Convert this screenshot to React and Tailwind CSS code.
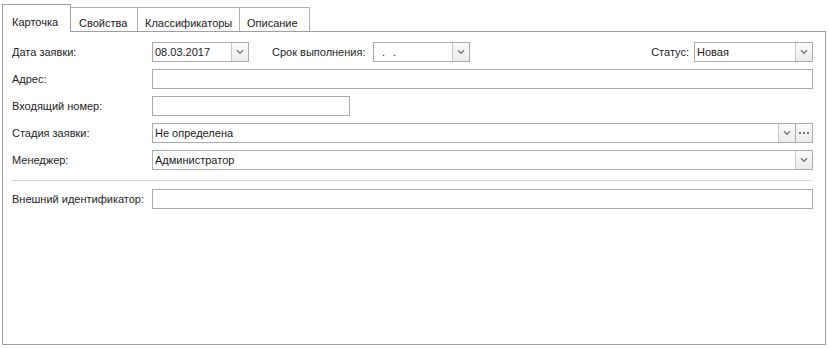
import React from "react";

const font = { fontFamily: '"Liberation Sans", Arial, sans-serif' };

function Chevron() {
  return (
    <svg width="8" height="6" viewBox="0 0 8 6" className="block">
      <path d="M1 1.3 L4 4.2 L7 1.3" fill="none" stroke="#7a7a7a" strokeWidth="1.5" />
    </svg>
  );
}

function DropBtn() {
  return (
    <div className="w-[17px] h-full flex items-center justify-center border-l border-[#c9c9c9] bg-gradient-to-b from-[#fbfbfb] to-[#ebebeb]">
      <Chevron />
    </div>
  );
}

function Combo({ className = "", value = "", children }) {
  return (
    <div className={"h-[20px] border border-[#ababab] bg-white flex items-stretch " + className}>
      <div className="flex-1 flex items-center pl-[2px] text-[11px] text-[#1b1b1b] whitespace-nowrap overflow-hidden">
        {children ?? value}
      </div>
      <DropBtn />
    </div>
  );
}

function TextBox({ className = "" }) {
  return <div className={"h-[20px] border border-[#ababab] bg-white " + className} />;
}

function Label({ children, className = "" }) {
  return (
    <div className={"text-[11px] text-[#1e1e1e] whitespace-nowrap " + className}>{children}</div>
  );
}

export default function App() {
  return (
    <div className="w-[829px] h-[348px] bg-white overflow-hidden" style={font}>
      <div className="pl-[2px] pt-[4px] flex items-end">
        <div className="relative z-10 h-[28px] -mb-px w-[69px] border border-b-0 border-[#a0a0a0] bg-white flex items-start pt-[9px] pl-[9px] text-[11px] text-[#1b1b1b]">
          Карточка
        </div>
        <div className="h-[24px] w-[67px] border border-l-0 border-b-0 border-[#b0b0b0] bg-white flex items-start pt-[7px] pl-[8px] text-[11px] text-[#1b1b1b]">
          Свойства
        </div>
        <div className="h-[24px] w-[102px] border border-l-0 border-b-0 border-[#b0b0b0] bg-white flex items-start pt-[7px] pl-[7px] text-[11px] text-[#1b1b1b]">
          Классификаторы
        </div>
        <div className="h-[24px] w-[70px] border border-l-0 border-b-0 border-[#b0b0b0] bg-white flex items-start pt-[7px] pl-[7px] text-[11px] text-[#1b1b1b]">
          Описание
        </div>
      </div>
      <div className="ml-[2px] w-[824px] h-[314px] border border-[#a0a0a0] bg-white pl-[9px] pr-[12px] pt-[10px]">
        <div className="flex flex-col gap-[7px]">
          <div className="flex items-center h-[20px]">
            <Label className="w-[140px]">Дата заявки:</Label>
            <Combo className="w-[97px]" value="08.03.2017" />
            <Label className="ml-[23px] w-[101px]">Срок выполнения:</Label>
            <Combo className="w-[97px]">
              <span className="pl-[6px]">.</span>
              <span className="pl-[8px]">.</span>
            </Combo>
            <div className="flex-1" />
            <Label className="mr-[5px]">Статус:</Label>
            <Combo className="w-[119px]" value="Новая" />
          </div>
          <div className="flex items-center h-[20px]">
            <Label className="w-[140px]">Адрес:</Label>
            <TextBox className="flex-1" />
          </div>
          <div className="flex items-center h-[20px]">
            <Label className="w-[140px]">Входящий номер:</Label>
            <TextBox className="w-[198px]" />
          </div>
          <div className="flex items-center h-[20px]">
            <Label className="w-[140px]">Стадия заявки:</Label>
            <Combo className="flex-1" value="Не определена" />
            <div className="w-[17px] h-[20px] border border-l-0 border-[#ababab] bg-gradient-to-b from-[#fbfbfb] to-[#ebebeb] flex items-center justify-center gap-[2px]">
              <span className="w-[2px] h-[2px] bg-[#7a7a7a]" />
              <span className="w-[2px] h-[2px] bg-[#7a7a7a]" />
              <span className="w-[2px] h-[2px] bg-[#7a7a7a]" />
            </div>
          </div>
          <div className="flex items-center h-[20px]">
            <Label className="w-[140px]">Менеджер:</Label>
            <Combo className="flex-1" value="Администратор" />
          </div>
        </div>
        <div className="mt-[10px] mb-[8px] h-px bg-[#d6d6d6]" />
        <div className="flex items-center h-[20px]">
          <Label className="w-[140px]">Внешний идентификатор:</Label>
          <TextBox className="flex-1" />
        </div>
      </div>
    </div>
  );
}
